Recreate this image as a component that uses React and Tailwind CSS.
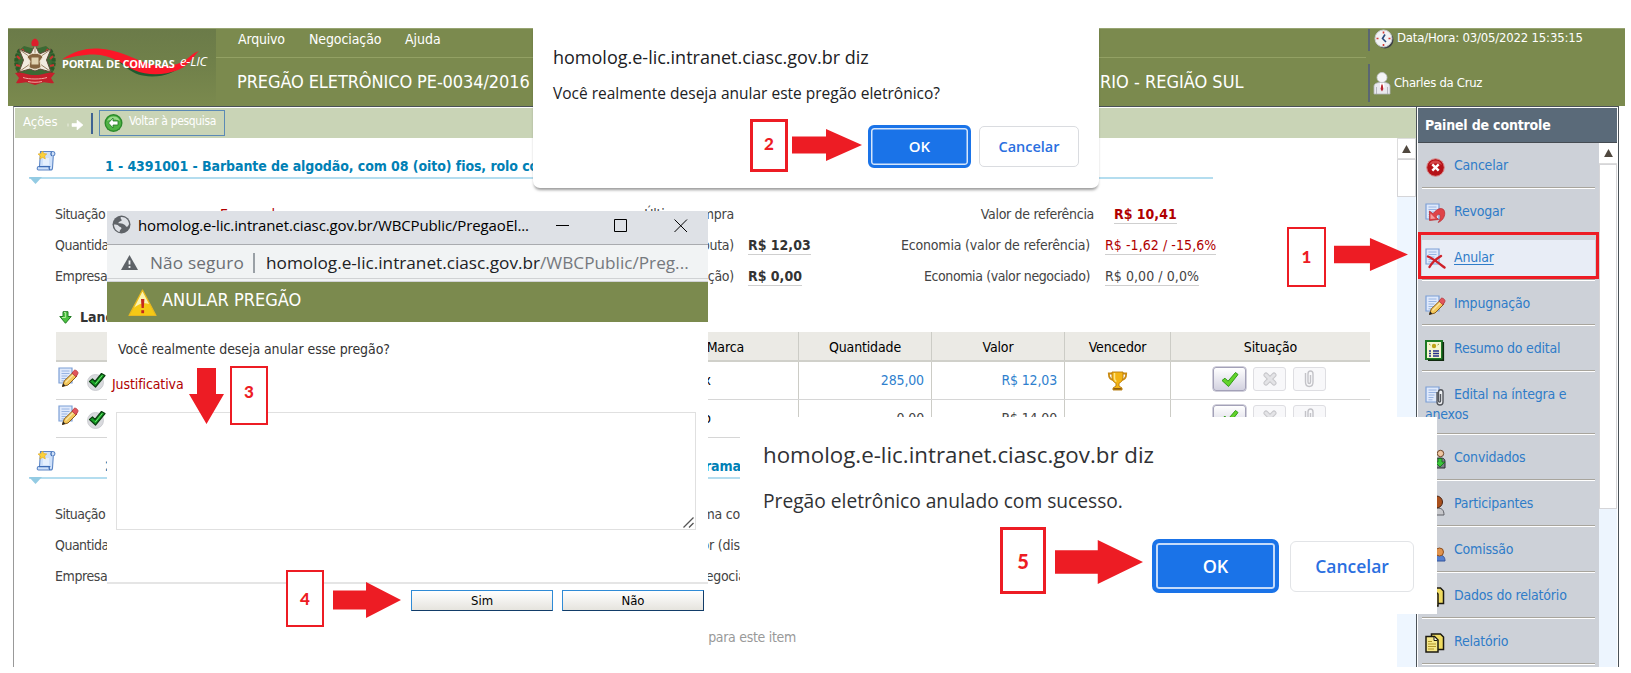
import React from "react";

/* ---------- icons ---------- */

function Emblem() {
  return (
    <svg width="44" height="48" viewBox="0 0 44 48" className="shrink-0">
      <path d="M11 8L4 14 1.500 24 4 34 13 38h18l9-4 2.500-10L40 14 33 8l-11 3z" fill="#3c6a34" />
      <path d="M7 12c-5 7-5 16 0 23M37 12c5 7 5 16 0 23" stroke="#2a5a28" strokeWidth="4" fill="none" strokeDasharray="3 1.500" />
      <path d="M4 18l3 3M3 27l4 1M40 18l-3 3M41 27l-4 1M9 11l2 3M35 11l-2 3" stroke="#c9342f" strokeWidth="2.200" />
      <path d="M22 7l4.500 9L38 11l-4.500 11L38 34l-11-3-5 2-5-2-11 3 4.500-12L6 11l11.500 5z" fill="#f1ece0" stroke="#5f4c38" strokeWidth="1" />
      <path d="M22 8v24M7 12l30 21M37 12L7 33" stroke="#9a8365" strokeWidth="1" />
      <path d="M14 19c3-5 13-5 16 0l-3 4 1 6c-3 3-9 3-12 0l1-6z" fill="#84643f" stroke="#efe5d0" strokeWidth="1" />
      <path d="M18.500 19.500h7v7h-7z" fill="#e0d2b0" />
      <path d="M22 .5c3 1 4.500 4 3 7.500h-6c-1.500-3.500 0-6.500 3-7.500z" fill="#dc1f2c" />
      <path d="M2 35c6-2 11 2 20 2s14-4 20-2l-4 5 3 5c-6 1-9-2-13 0l-6 2-6-2c-4-2-7 1-13 0l3-5z" fill="#c41f2b" />
      <path d="M10 39.500c6 2 18 2 24 0M15 43.500c4 1 10 1 14 0" stroke="#f0aaa0" strokeWidth="1" fill="none" />
    </svg>
  );
}

function Swoosh() {
  return (
    <svg width="140" height="34" viewBox="0 0 140 34" className="absolute -left-[2px] -top-[12px]">
      <path d="M54 14C66 20 70 31 92 31.500C106 31.500 114 27 122 21L100 22Z" fill="#1f5a2f" />
      <path d="M2 14.500C14 6 26 3 38 3.500C58 4.500 72 13 86 18C100 22.500 112 22 122 17C130 13 132 8 139 6C133 11 130 20 118 25C104 30.500 88 31 74 25C62 19 52 10 34 9.500C22 9.500 12 12 2 14.500Z" fill="#fb1728" />
    </svg>
  );
}

function ClockIcon() {
  return (
    <svg width="20" height="20" viewBox="0 0 20 20">
      <circle cx="11" cy="11" r="8.500" fill="#3d4046" />
      <circle cx="9.500" cy="9.500" r="8.500" fill="#f2f3f5" stroke="#c9ccd2" />
      <path d="M9.500 2.500v2M9.500 15v2M2.500 9.500h2M14.500 9.500h2" stroke="#d33a35" strokeWidth="1.600" />
      <path d="M11 5.500L8.500 9.500l3.500 3.500" stroke="#2b4a7c" strokeWidth="1.600" fill="none" />
    </svg>
  );
}

function SuitIcon() {
  return (
    <svg width="18" height="23" viewBox="0 0 18 23">
      <path d="M1 22V14c0-2 2-3 5-3.500h6c3 .5 5 1.500 5 3.500v8z" fill="#e9e9ee" stroke="#b4b5bd" strokeWidth=".8" />
      <path d="M3.500 15v7M14.500 15v7" stroke="#a9aab2" strokeWidth=".8" />
      <path d="M7 10.500l2 1.500 2-1.500 .5 5-2.500 3-2-3z" fill="#fff" />
      <path d="M8.400 12.500h1.200l.8 4.500-1.400 2.500-1.400-2.500z" fill="#b8242f" />
      <circle cx="9" cy="5.500" r="5" fill="#f4f4f6" stroke="#c4c5cb" strokeWidth=".8" />
    </svg>
  );
}

function BackIcon() {
  return (
    <svg width="19" height="20" viewBox="0 0 19 20">
      <circle cx="9.500" cy="10" r="9" fill="#2b8a2b" />
      <circle cx="9.500" cy="10" r="7.600" fill="#4fb344" />
      <path d="M3 8a7 7 0 0 1 13 0c-4-2-9-2-13 0z" fill="#9bd98c" />
      <path d="M9 5L4.500 10 9 15v-3h5V8H9z" fill="#fff" stroke="#237a25" strokeWidth=".8" />
    </svg>
  );
}

function ScrollIcon() {
  return (
    <svg width="20" height="21" viewBox="0 0 20 21">
      <path d="M4.500 1.500h12.500c2.500 0 2.500 4 .3 4.300L16.500 18c0 1-.8 2-2 2H2.500C.8 20 .8 17 2.500 16.500h1z" fill="#cfe1fa" stroke="#5c86c6" strokeWidth="1.100" />
      <path d="M15.500 2c-1 1.500-.6 3.500.8 3.800M3 16.700h10.500c-.8 1.200-.2 3 .8 3" stroke="#3f6db5" strokeWidth="1.300" fill="none" />
      <path d="M7 8h6v7H7z" fill="#e6f0fd" />
      <path d="M6.500 1l1.300 2.600 3 .3-2.200 2 .7 3-2.800-1.500L3.800 9l.6-3L2 4l3.200-.4z" fill="#fbd23c" stroke="#e3a71c" strokeWidth=".6" />
    </svg>
  );
}

function DownIcon() {
  return (
    <svg width="13" height="13" viewBox="0 0 13 13">
      <path d="M4 .7h5v4.800h3.200L6.500 12.300.8 5.500H4z" fill="#4bc341" stroke="#217a22" strokeWidth="1" />
      <path d="M5 1.500h1.600v5H3" stroke="#b3ec9e" fill="none" />
    </svg>
  );
}

function Page() {
  return (
    <>
      <path d="M1 1h13v15H1z" fill="#dfe9fb" stroke="#7c9fd6" strokeWidth="1.200" />
      <path d="M3.500 4h8M3.500 6.500h8M3.500 9h6M3.500 11.500h5M3.500 13.800h4" stroke="#98b4e2" strokeWidth="1" />
    </>
  );
}

function NoteEditIcon() {
  return (
    <svg width="21" height="21" viewBox="0 0 21 21">
      <Page />
      <path d="M4.500 19.500l1.700-5.500L15 5.500l4 3.500-9 9z" fill="#f3c75a" stroke="#8a5c1a" strokeWidth="1" />
      <path d="M7.500 15.500l8.500-8.500" stroke="#fae5a6" strokeWidth="1.300" />
      <path d="M14 6.200l2-2.700c1.200-1.300 5 1.300 3.800 3.300L18 9.800z" fill="#e2555b" stroke="#b2353b" strokeWidth=".8" />
      <path d="M4 20l1-3.400 2.400 2z" fill="#222" />
    </svg>
  );
}

function OkBadgeIcon() {
  return (
    <svg width="19" height="19" viewBox="0 0 19 19">
      <circle cx="8.500" cy="10.500" r="8" fill="#d9dade" stroke="#c4c5ca" strokeWidth=".8" />
      <path d="M2.500 9.500l3-2.500L8 9.500l6.500-8L18 3.500 8.500 15z" fill="#17a025" stroke="#0a3d10" strokeWidth="1.200" strokeLinejoin="round" />
      <path d="M8.300 12l7-8.500" stroke="#6fe070" strokeWidth="1" />
    </svg>
  );
}

function TrophyIcon() {
  return (
    <svg width="21" height="20" viewBox="0 0 21 20">
      <path d="M5.500 2.500H1.800c0 4 2 6.300 5 6.500M15.500 2.500h3.700c0 4-2 6.300-5 6.500" stroke="#c98a12" strokeWidth="1.800" fill="none" />
      <path d="M5 1h11v5c0 3.500-2 5.500-4 6.300V15l3 2v2H6v-2l3-2v-2.700C7 11.500 5 9.500 5 6z" fill="#f3b415" stroke="#b77a0c" strokeWidth=".9" />
      <path d="M7.500 2v5c0 1.500.8 2.800 1.800 3.600" stroke="#fde58a" strokeWidth="1.500" fill="none" />
      <path d="M6.500 17.800h8" stroke="#8b5a10" strokeWidth="1.500" />
    </svg>
  );
}

function CancelIcon() {
  return (
    <svg width="21" height="21" viewBox="0 0 21 21">
      <circle cx="10.500" cy="10.500" r="8.800" fill="#b51218" stroke="#d98a8c" strokeWidth="1" />
      <path d="M4 8a7 7 0 0 1 13 0c-4-2-9-2-13 0z" fill="#d5474a" />
      <path d="M7.300 7.300l6.400 6.400M13.700 7.300l-6.400 6.400" stroke="#fff" strokeWidth="2.400" />
    </svg>
  );
}

function RevokeIcon() {
  return (
    <svg width="21" height="21" viewBox="0 0 21 21">
      <Page />
      <path d="M4.500 8v9.500l9-1-2.500-2.500c1.500-3 3.500-3.500 4.200-1.500.6 2-.4 4.500-2 7 5-2 7.300-7 6.300-11C18.500 4 12.500 4.500 8 10.800z" fill="#df4348" stroke="#b8262c" strokeWidth=".7" />
      <path d="M5.500 10.500v5.500l5-.6z" fill="#f3a0a0" />
    </svg>
  );
}

function AnnulIcon() {
  return (
    <svg width="21" height="22" viewBox="0 0 21 22">
      <Page />
      <path d="M3 8.500c5 2 10 6 16.500 11M16 8C11 11 7 14.500 4.500 19" stroke="#cf2029" strokeWidth="2.400" fill="none" strokeLinecap="round" />
    </svg>
  );
}

function SummaryIcon() {
  return (
    <svg width="20" height="21" viewBox="0 0 20 21">
      <path d="M1 1h16v18H1z" fill="#f7f6d0" stroke="#1d7a24" strokeWidth="2" />
      <path d="M18.300 2v18.300H3" stroke="#10290f" strokeWidth="1.600" fill="none" />
      <circle cx="9" cy="6" r="2.200" fill="#bfa416" />
      <path d="M4 4l1.500 1M14 4l-1.500 1" stroke="#8c9a30" />
      <path d="M4 11h2M8 11h6M4 13.500h2M8 13.500h6M4 16h2M8 16h6" stroke="#26308c" strokeWidth="1.400" />
    </svg>
  );
}

function ClipDocIcon() {
  return (
    <svg width="21" height="21" viewBox="0 0 21 21">
      <Page />
      <path d="M12 6v10c0 4 6 4 6 0V6c0-3-4.500-3-4.500 0v9c0 1.500 2 1.500 2 0V8" stroke="#54575e" strokeWidth="1.400" fill="#eef0f3" />
    </svg>
  );
}

function GuestIcon() {
  return (
    <svg width="21" height="21" viewBox="0 0 21 21">
      <path d="M8 19v-6c0-3 3-4 7-4s5 1 5 4v6z" fill="#7c8088" stroke="#2c2d31" />
      <circle cx="15.500" cy="4.500" r="3.200" fill="#efc6a2" stroke="#6b4427" />
      <path d="M13 9.500h4v3.500h3l-5 5-5-5h3z" fill="#39c23a" stroke="#14641a" strokeWidth=".8" />
    </svg>
  );
}

function ManIcon() {
  return (
    <svg width="21" height="21" viewBox="0 0 21 21">
      <path d="M5 20c0-5 2-7 7-7s7 2 7 7z" fill="#c7c8cc" stroke="#5f6066" />
      <circle cx="11.500" cy="7" r="6" fill="#a9501d" stroke="#4a2311" />
    </svg>
  );
}

function TeamIcon() {
  return (
    <svg width="21" height="21" viewBox="0 0 21 21">
      <path d="M9 20c0-4 2-6 5.500-6s5.500 2 5.500 6z" fill="#5680cf" stroke="#33559c" />
      <circle cx="14.500" cy="11" r="4" fill="#e0944f" stroke="#8f4f1e" />
    </svg>
  );
}

function ReportIcon() {
  return (
    <svg width="20" height="20" viewBox="0 0 20 20">
      <path d="M6.500 1h9l3 3v12.500h-12z" fill="#f0dc62" stroke="#1c1a10" strokeWidth="1.500" />
      <path d="M1 3.500h8.500l3.500 3.500V19H1z" fill="#f5e789" stroke="#1c1a10" strokeWidth="1.500" />
      <path d="M9 4v3.500h3.500" stroke="#1c1a10" fill="#fff" />
      <path d="M3 8.500h4M3 11h8M3 13.500h8M3 16h6" stroke="#b3962a" strokeWidth="1.100" />
    </svg>
  );
}

function WarningIcon() {
  return (
    <svg width="29" height="28" viewBox="0 0 29 28">
      <path d="M14.500 1 L28 26.500 H1Z" fill="#f5c915" stroke="#e8b820" strokeWidth="1.200" strokeLinejoin="round" />
      <path d="M14.500 2.500 L21 15 C15 13 9 16 6 19Z" fill="#fbf3b0" />
      <path d="M13 10h3.400l-.6 9h-2.200z" fill="#c5281c" />
      <path d="M13.300 21.200h2.800v3h-2.800z" fill="#c5281c" />
    </svg>
  );
}

function GlobeIcon() {
  return (
    <svg width="19" height="19" viewBox="0 0 19 19">
      <circle cx="9.500" cy="9.500" r="9" fill="#5f6368" />
      <path d="M9 2c-1.500 1.500 1.500 2.500.5 3.800C8 7 6.500 6.300 6.500 8.300c2 .7 4-.3 5.500 1.200 1.800.5 1.500 2.700 3.300 2.200 1-.6 1.700-2 1.700-3.200C16.500 4.500 13 1.500 9 2zM2 9.500c2 0 3.500 0 4.500 1.200.8 1.300 3 1 3 2.800-.8 1-2 1.500-1.800 3.500C4.500 16.500 2 13 2 9.500z" fill="#dee1e6" />
    </svg>
  );
}

function AlertTriangle() {
  return (
    <svg width="17" height="15" viewBox="0 0 17 15">
      <path d="M8.500 0L17 15H0z" fill="#5f6368" />
      <path d="M8.500 5.500v4M8.500 11v2" stroke="#f1f3f4" strokeWidth="1.800" />
    </svg>
  );
}

/* ---------- callouts ---------- */

function Callout({ n, className }) {
  return (
    <div className={"absolute flex items-center justify-center border-[#ed1c24] bg-white font-['Lato',sans-serif] font-black text-[#ed1c24] " + className}>
      {n}
    </div>
  );
}

function ArrowRight({ className }) {
  return (
    <svg viewBox="0 0 70 34" preserveAspectRatio="none" className={"absolute " + className}>
      <path d="M0 8H34V0L70 17L34 34V26H0Z" fill="#ed1c24" />
    </svg>
  );
}

/* ---------- page ---------- */

function Header() {
  return (
    <header className="ml-2 flex h-[78px] w-[1617px] border-t border-[#97a472] bg-[#7b8a4e] text-white">
      <div className="flex w-[208px] items-start bg-linear-to-b from-[#6b7b49] via-[#71814a] to-[#7b8a4e] pl-[5px] pt-[9px]">
        <Emblem />
        <div className="relative ml-[5px] mt-[19px] w-[150px] whitespace-nowrap">
          <Swoosh />
          <span className="relative block font-['Open_Sans',sans-serif] text-[11px] font-bold leading-[14px] tracking-[-0.27px]">PORTAL DE COMPRAS</span>
          <span className="absolute left-[118px] -top-[4px] font-['Open_Sans',sans-serif] text-[13px] italic leading-[16px] tracking-[-0.2px]">e-LIC</span>
        </div>
      </div>
      <div className="w-[1152px]">
        <nav className="flex h-[29px] w-[1150px] border-b border-[#93a164] pl-[22px] text-[14px] leading-[21px]">
          <span className="w-[71px] tracking-[-0.2px]">Arquivo</span>
          <span className="w-[96px] tracking-[-0.1px]">Negociação</span>
          <span>Ajuda</span>
        </nav>
        <div className="flex items-center whitespace-nowrap pt-[10px] pl-[21px] text-[18px] leading-[28px]">
          <span className="w-[863px] tracking-[-0.1px]">PREGÃO ELETRÔNICO PE-0034/2016</span>
          <span>RIO - REGIÃO SUL</span>
        </div>
      </div>
      <div className="flex flex-col whitespace-nowrap text-[13px]">
        <div className="flex h-[22px] items-start gap-[3px] border-l-2 border-[#5a6672] pl-[4px] leading-[18px]">
          <ClockIcon />
          <span className="tracking-[-0.18px]">Data/Hora: 03/05/2022 15:35:15</span>
        </div>
        <div className="mt-[13px] flex h-[38px] items-center gap-[3px] border-l-2 border-[#5a6672] pl-[3px]">
          <SuitIcon />
          <span className="tracking-[-0.3px]">Charles da Cruz</span>
        </div>
      </div>
    </header>
  );
}

function ActionBar() {
  return (
    <div className="flex h-[30px] items-center bg-[#c9d4b6] pl-[8px] text-white">
      <span className="w-[44px] pb-[2px] text-[13px] leading-[20px]">Ações</span>
      <svg width="17" height="10" viewBox="0 0 17 10" className="mt-[4px]">
        <path d="M1 3.500v3M5 3.500h5V0l6 5-6 5V6.500H5z" fill="#fff" stroke="#fff" strokeWidth=".6" />
      </svg>
      <div className="ml-[7px] h-[21px] w-[2px] bg-[#3f6292]" />
      <div className="ml-[6px] flex h-[26px] w-[126px] items-center border border-[#5b8ab5] pl-[4px]">
        <BackIcon />
        <span className="ml-[6px] whitespace-nowrap pb-[4px] text-[12px] tracking-[-0.35px]">Voltar à pesquisa</span>
      </div>
    </div>
  );
}

function SectionTitle({ left, right }) {
  return (
    <div className="relative ml-[14px] flex h-[41px] w-[1184px] items-end border-b-2 border-[#b4ddef] font-bold text-[#0080b5]">
      <div className="mb-[6px] ml-[7px] w-[69px]"><ScrollIcon /></div>
      <span className="w-[600px] whitespace-nowrap pb-[2px] text-[14px] leading-[17px] tracking-[-0.08px]">{left}</span>
      <span className="whitespace-nowrap pb-[2px] text-[14px] leading-[17px] tracking-[-0.15px]">{right}</span>
      <svg width="13" height="7" viewBox="0 0 13 7" className="absolute left-0 top-[39px]">
        <path d="M0 0h13L6.500 7z" fill="#93cbe3" />
      </svg>
    </div>
  );
}

const infoGrid = "grid h-[31px] grid-cols-[165px_200px_314px_13px_150px_193px_14px_200px] items-center whitespace-nowrap ";

function Value({ children, className }) {
  return <span className={"justify-self-start border-b border-[#cfcfcf] leading-[18px] " + className}>{children}</span>;
}

function InfoRows({ filled }) {
  const second = filled ? "text-right tracking-[-0.25px]" : "-mr-[38px] text-right tracking-[-0.25px]";
  return (
    <div className="ml-[40px] pt-[20px] text-[14px] text-[#444]">
      <div className={infoGrid}>
        <span className="tracking-[-0.55px]">Situação</span>
        <span className="tracking-[-0.2px] text-[#b00000]">{filled && "Encerrado"}</span>
        <span className={second}>Última compra</span>
        <span /><span />
        <span className="-mr-1 text-right tracking-[-0.3px]">{filled && "Valor de referência"}</span>
        <span />
        {filled && <Value className="ml-[10px] font-bold text-[#b00000]">R$ 10,41</Value>}
      </div>
      <div className={infoGrid}>
        <span className="tracking-[-0.5px]">Quantidade</span>
        <span />
        <span className={second}>Menor valor (disputa)</span>
        <span />
        {filled ? <Value className="ml-px font-bold text-[#333]">R$ 12,03</Value> : <span />}
        <span className="text-right tracking-[-0.18px]">{filled && "Economia (valor de referência)"}</span>
        <span />
        {filled && <Value className="ml-px tracking-[0.07px] text-[#b00000]">R$ -1,62 / -15,6%</Value>}
      </div>
      <div className={infoGrid}>
        <span className="tracking-[-0.4px]">Empresa</span>
        <span />
        <span className={second}>Valor (negociação)</span>
        <span />
        {filled ? <Value className="ml-px font-bold text-[#333]">R$ 0,00</Value> : <span />}
        <span className="text-right tracking-[-0.4px]">{filled && "Economia (valor negociado)"}</span>
        <span />
        {filled && <Value className="ml-px tracking-[0.07px]">R$ 0,00 / 0,0%</Value>}
      </div>
    </div>
  );
}

function MiniButton({ children, active }) {
  return (
    <span className={"flex h-[24px] w-[33px] items-center justify-center rounded-[3px] border " + (active ? "border-[#a3a1b8] bg-linear-to-b from-white to-[#d3d2e0] shadow-[0_0_0_0.5px_#a3a1b8]" : "border-[#dedee2] bg-[#f8f8fa]")}>
      {children}
    </span>
  );
}

const cell = "border-r border-[#ccccc6] flex items-center ";

function TableRow({ brand, qty, price, winner }) {
  const tone = winner ? "text-[#2f7fce]" : "text-[#444]";
  return (
    <div className="grid h-[38px] grid-cols-[743px_133px_133px_106px_199px] border-b border-[#d6d6d6]">
      <div className={cell + "pl-[2px]"}>
        <div className="pb-[7px]"><NoteEditIcon /></div>
        <div className="ml-[8px] pt-[2px]"><OkBadgeIcon /></div>
        <span className="ml-auto pr-[87px]">{brand}</span>
      </div>
      <div className={cell + "justify-end pr-[7px] tracking-[-0.15px] " + tone}>{qty}</div>
      <div className={cell + "justify-end pr-[7px] tracking-[-0.15px] " + tone}>{price}</div>
      <div className={cell + "justify-center"}>{winner && <TrophyIcon />}</div>
      <div className="flex gap-[7px] pt-[5px] pl-[42px]">
        <MiniButton active>
          <svg width="18" height="17" viewBox="0 0 18 17"><path d="M1 9.500l3-2.300 3 3L14.500 1.500 17 3.500 7.500 15.500z" fill="#62d42a" stroke="#2f9a17" /></svg>
        </MiniButton>
        <MiniButton>
          <svg width="14" height="14" viewBox="0 0 14 14"><path d="M3 3l8 8M11 3l-8 8" stroke="#c6c6ca" strokeWidth="5" strokeLinecap="round" /><path d="M3 3l8 8M11 3l-8 8" stroke="#e3e3e6" strokeWidth="3" strokeLinecap="round" /></svg>
        </MiniButton>
        <MiniButton>
          <svg width="11" height="18" viewBox="0 0 11 18"><path d="M1.500 3v9c0 6 7.500 6 7.500 0V4c0-4-5-4-5 0v8c0 2 2.500 2 2.500 0V5" stroke="#c3c3c8" strokeWidth="1.400" fill="none" /></svg>
        </MiniButton>
      </div>
    </div>
  );
}

function Bids() {
  return (
    <div className="ml-[41px] w-[1314px] text-[14px]">
      <div className="flex h-[40px] items-end gap-[8px] pb-[6px] pl-[3px] font-bold leading-[18px] text-[#333]">
        <div className="pb-[2px]"><DownIcon /></div>
        <span>Lances</span>
      </div>
      <div className="grid h-[30px] grid-cols-[743px_133px_133px_106px_199px] border-b-2 border-[#d0d0ca] bg-[#ebeae5] tracking-[-0.15px] text-black">
        <div className={cell + "justify-end pr-[54px] pt-[2px]"}>Marca</div>
        <div className={cell + "justify-center pt-[2px]"}>Quantidade</div>
        <div className={cell + "justify-center pt-[2px]"}>Valor</div>
        <div className={cell + "justify-center pt-[2px]"}>Vencedor</div>
        <div className="flex items-center justify-center pt-[2px]">Situação</div>
      </div>
      <TableRow brand="x" qty="285,00" price="R$ 12,03" winner />
      <TableRow brand="o" qty="0,00" price="R$ 14,00" />
    </div>
  );
}

const menu = [
  { label: "Cancelar", Icon: CancelIcon, h: "h-[46px]" },
  { label: "Revogar", Icon: RevokeIcon, h: "h-[46px]" },
  { label: "Anular", Icon: AnnulIcon, h: "h-[46px]", active: true },
  { label: "Impugnação", Icon: NoteEditIcon, h: "h-[45px]" },
  { label: "Resumo do edital", Icon: SummaryIcon, h: "h-[46px]" },
  { label: "Edital na íntegra e", more: "anexos", Icon: ClipDocIcon, h: "h-[63px]" },
  { label: "Convidados", Icon: GuestIcon, h: "h-[46px]" },
  { label: "Participantes", Icon: ManIcon, h: "h-[46px]" },
  { label: "Comissão", Icon: TeamIcon, h: "h-[46px]" },
  { label: "Dados do relatório", Icon: ReportIcon, h: "h-[46px]" },
  { label: "Relatório", Icon: ReportIcon, h: "h-[46px]" },
];

function ArrowUp() {
  return (
    <svg width="9" height="8" viewBox="0 0 10 9">
      <path d="M5 0l5 9H0z" fill="#50483f" />
    </svg>
  );
}

function ControlPanel() {
  return (
    <aside className="flex w-[203px] flex-col border-x border-t border-[#4b5258] px-px pt-px">
      <div className="h-[35px] border-b border-[#454b52] bg-[#5a6a79] pl-[7px] text-[14px] font-bold leading-[34px] tracking-[-0.17px] text-white">Painel de controle</div>
      <div className="flex h-[524px]">
        <div className="w-[181px] overflow-hidden bg-[#cdd1d8] pl-[4px] pr-[4px]">
          {menu.map(({ label, more, Icon, h, active }) => (
            <div key={label} className={"flex flex-col border-b border-white " + h}>
              <div className={"flex grow flex-col border-b border-[#a8a59d] pl-[3px] text-[14px] tracking-[-0.2px] text-[#2f7cc8] " + (active ? "mt-[5px] bg-[#e8edf6] pt-[6px]" : "pt-[11px]")}>
                <div className="flex h-[21px] items-center">
                  <div className="w-[29px] shrink-0 pt-[5px]"><Icon /></div>
                  <span className={"whitespace-nowrap leading-[18px] " + (active ? "underline underline-offset-2" : "")}>{label}</span>
                </div>
                {more && <span className="leading-[20px]">{more}</span>}
              </div>
            </div>
          ))}
        </div>
        <div className="flex w-[18px] flex-col bg-[#edf5fe]">
          <div className="flex h-[21px] items-center justify-center border-b border-[#ddd] bg-white"><ArrowUp /></div>
          <div className="h-[345px] border border-[#d5d5d8] bg-white" />
        </div>
      </div>
    </aside>
  );
}

/* ---------- overlays ---------- */

function AnnulWindow() {
  return (
    <div className="absolute left-[107px] top-[211px] h-[404px] w-[601px] bg-white">
      <div className="flex h-[34px] items-center border-b border-[#a9abaf] bg-[#dee1e6] pl-[5px] font-['Open_Sans',sans-serif] text-black">
        <div className="pb-[6px]"><GlobeIcon /></div>
        <span className="ml-[7px] w-[418px] whitespace-nowrap pb-[4px] text-[15px] tracking-[-0.13px]">homolog.e-lic.intranet.ciasc.gov.br/WBCPublic/PregaoEl...</span>
        <svg width="14" height="14" viewBox="0 0 14 14" className="mb-[4px]"><path d="M0 6.500h13" stroke="#000" /></svg>
        <svg width="14" height="14" viewBox="0 0 14 14" className="mb-[4px] ml-[44px]"><path d="M.5.5h12v12H.5z" fill="none" stroke="#000" /></svg>
        <svg width="14" height="14" viewBox="0 0 14 14" className="mb-[4px] ml-[46px]"><path d="M.5.5l12.500 12.500M13 .5L.5 13" stroke="#000" fill="none" /></svg>
      </div>
      <div className="flex h-[33px] items-center whitespace-nowrap bg-[#f1f3f4] pt-[2px] pl-[14px] font-['Open_Sans',sans-serif] text-[17.200px]">
        <AlertTriangle />
        <span className="ml-[12px] w-[103px] tracking-[0.15px] text-[#6b6f74]">Não seguro</span>
        <div className="mr-[11px] h-[20px] w-[2px] bg-[#9aa0a6]" />
        <span className="text-[#202124]">homolog.e-lic.intranet.ciasc.gov.br</span>
        <span className="text-[#75797e]">/WBCPublic/Preg...</span>
      </div>
      <div className="h-[4px] border-y border-[#d0d2d4] bg-[#f1f3f4]" />
      <div className="flex h-[40px] items-center bg-[#7b8a4e] pl-[21px] text-[18px] text-white">
        <div className="w-[34px] pt-[1px]"><WarningIcon /></div>
        <span className="pb-[5px]">ANULAR PREGÃO</span>
      </div>
      <p className="pt-[18px] pl-[11px] text-[14px] leading-[18px] tracking-[-0.08px] text-[#333]">Você realmente deseja anular esse pregão?</p>
      <p className="pt-[17px] pl-[5px] text-[14px] leading-[18px] tracking-[-0.1px] text-[#b00000]">Justificativa</p>
      <div className="mt-[19px] ml-[9px] flex h-[118px] w-[580px] items-end justify-end border border-[#e0e0e0] pb-[1px] pr-[1px]">
        <svg width="11" height="11" viewBox="0 0 11 11"><path d="M.5 10.500l10-10M6 10.500l4.500-4.500" stroke="#555" strokeWidth="1.300" /></svg>
      </div>
      <div className="mt-[52px] h-[2px] bg-[#e5e5e5]" />
      <div className="mt-[6px] flex justify-end gap-[9px] pr-[4px] text-[13px] text-black">
        <button className="h-[21px] w-[142px] border border-[#2f8bd6] border-b-[#123c68] bg-linear-to-b from-white to-[#e6e4de] leading-[19px]">Sim</button>
        <button className="h-[21px] w-[142px] border border-[#2f8bd6] border-b-[#123c68] border-r-[#123c68] bg-linear-to-b from-white to-[#e6e4de] leading-[19px]">Não</button>
      </div>
    </div>
  );
}

function ConfirmDialog() {
  return (
    <div className="absolute left-[533px] top-[26px] h-[162px] w-[566px] rounded-b-[7px] bg-white pl-[20px] pt-[17px] font-['Open_Sans',sans-serif] text-[#202124] shadow-[0_3px_3px_-1px_rgba(0,0,0,0.4)]">
      <p className="whitespace-nowrap text-[18px] leading-[28px]">homolog.e-lic.intranet.ciasc.gov.br diz</p>
      <p className="mt-[9px] whitespace-nowrap text-[15.500px] leading-[26px]">Você realmente deseja anular este pregão eletrônico?</p>
      <div className="mt-[19px] flex items-center justify-end gap-[8px] pr-[20px] font-semibold">
        <button className="h-[43px] w-[103px] rounded-[6px] border-[3px] border-[#1a73e8] bg-[#1a73e8] text-[15px] text-white shadow-[inset_0_0_0_1.5px_#d6e6fb]">OK</button>
        <button className="h-[41px] w-[100px] rounded-[5px] border border-[#dadce0] text-[14.500px] text-[#2a6fe0]">Cancelar</button>
      </div>
    </div>
  );
}

function SuccessDialog() {
  return (
    <div className="absolute left-[740px] top-[417px] h-[197px] w-[697px] bg-white pl-[23px] pt-[21px] font-['Open_Sans',sans-serif] text-[#303134]">
      <p className="whitespace-nowrap text-[22.300px] leading-[34px]">homolog.e-lic.intranet.ciasc.gov.br diz</p>
      <p className="mt-[15px] whitespace-nowrap text-[19.200px] leading-[28px]">Pregão eletrônico anulado com sucesso.</p>
      <div className="mt-[24px] flex items-center justify-end gap-[11px] pr-[23px] font-semibold">
        <button className="h-[54px] w-[127px] rounded-[7px] border-[4px] border-[#1a73e8] bg-[#1a73e8] text-[18px] text-white shadow-[inset_0_0_0_2px_#c4dbfa]">OK</button>
        <button className="h-[51px] w-[124px] rounded-[6px] border border-[#e2e4e7] text-[17.500px] text-[#2a6fe0]">Cancelar</button>
      </div>
    </div>
  );
}

export default function App() {
  return (
    <div className="relative h-[673px] w-[1631px] overflow-hidden bg-white pt-[28px] font-['DejaVu_Sans_Condensed','DejaVu_Sans',sans-serif]">
      <Header />
      <div className="ml-[13px] flex h-[561px] w-[1606px] overflow-hidden">
        <main className="flex w-[1403px] flex-col border-l border-t border-l-[#999] border-t-[#4b5258] pl-px pt-px">
          <ActionBar />
          <div className="flex h-[529px]">
            <div className="w-[1382px] overflow-hidden">
              <SectionTitle left="1 - 4391001 - Barbante de algodão, com 08 (oito) fios, rolo com" />
              <InfoRows filled />
              <Bids />
              <SectionTitle left="2 -" right="ramas" />
              <InfoRows />
              <p className="w-[781px] pt-[36px] text-right text-[14px] leading-[18px] tracking-[-0.3px] text-[#999]">para este item</p>
            </div>
            <div className="w-[19px] bg-[#eef6ff]">
              <div className="flex h-[21px] items-center justify-center border border-[#ddd] bg-white"><ArrowUp /></div>
              <div className="h-[38px] border border-[#d5d5d8] bg-white" />
            </div>
          </div>
        </main>
        <ControlPanel />
      </div>

      <ConfirmDialog />
      <AnnulWindow />
      <SuccessDialog />

      <div className="absolute left-[1418px] top-[232px] h-[47px] w-[181px] border-[3px] border-[#ed1c24]" />
      <Callout n="1" className="left-[1287px] top-[227px] h-[60px] w-[39px] border-2 text-[17px]" />
      <ArrowRight className="left-[1334px] top-[238px] h-[33px] w-[74px]" />
      <Callout n="2" className="left-[750px] top-[119px] h-[53px] w-[38px] border-[3px] pb-[3px] text-[17px]" />
      <ArrowRight className="left-[792px] top-[129px] h-[32px] w-[70px]" />
      <Callout n="3" className="left-[230px] top-[366px] h-[59px] w-[38px] border-2 pb-[8px] text-[17px]" />
      <svg viewBox="0 0 35 56" className="absolute left-[189px] top-[368px] h-[56px] w-[35px]">
        <path d="M8 0H27V26H35L17.500 56L0 26H8Z" fill="#ed1c24" />
      </svg>
      <Callout n="4" className="left-[286px] top-[570px] h-[57px] w-[38px] border-2 text-[17px]" />
      <ArrowRight className="left-[333px] top-[582px] h-[36px] w-[68px]" />
      <Callout n="5" className="left-[1000px] top-[527px] h-[67px] w-[46px] border-[3px] text-[20px]" />
      <ArrowRight className="left-[1055px] top-[540px] h-[44px] w-[88px]" />
    </div>
  );
}
